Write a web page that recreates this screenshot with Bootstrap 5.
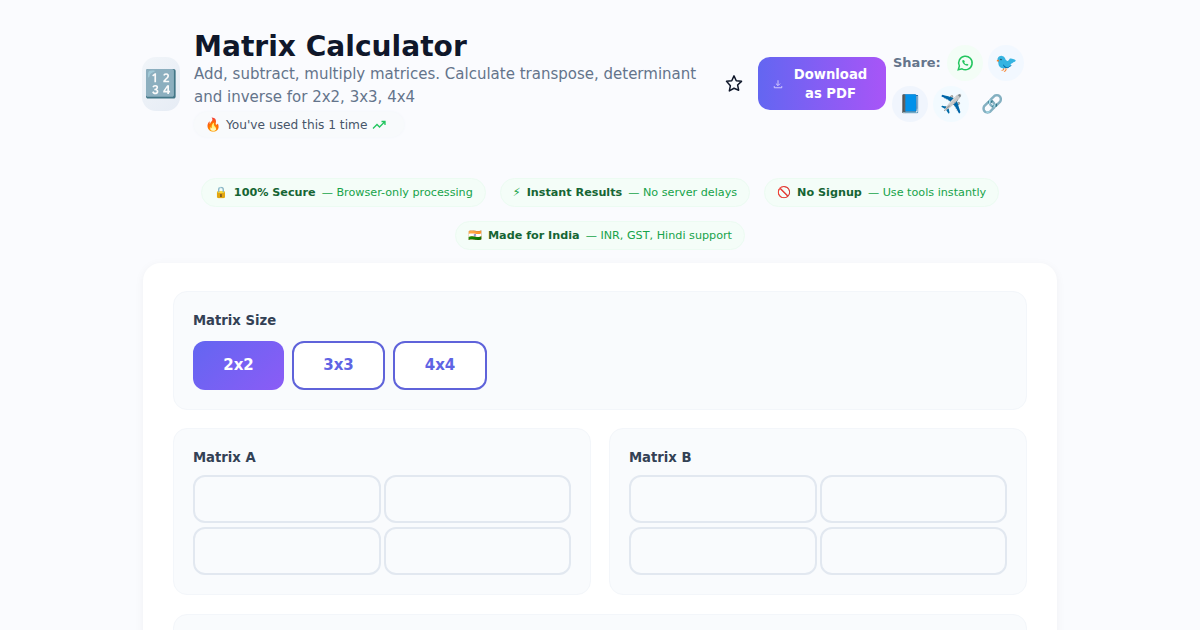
<!DOCTYPE html>
<html lang="en">
<head>
  <meta charset="UTF-8">
  <title>Matrix Calculator</title>
  <link href="https://cdn.jsdelivr.net/npm/bootstrap@5.3.0/dist/css/bootstrap.min.css" rel="stylesheet">
  <style>
    html { overflow: hidden; }
    body { background: #fafbfe; font-family: "DejaVu Sans", sans-serif; color: #0f172a; }
    .page-wrap { width: 914px; margin: 0 auto; padding-top: 30px; }
    .tool-head { height: 148px; }
    .tool-icon { width: 38px; height: 54px; margin: 27px 14px 0 -1px; border-radius: 14px; background: linear-gradient(135deg, #f1f5f9, #e6ecf5); font-size: 27px; line-height: 54px; text-align: center; flex: none; }
    .tool-title { font-size: 28.1px; font-weight: 700; line-height: 32px; margin: 1px 0 0; color: #0f172a; }
    .tool-sub { font-size: 15px; line-height: 23px; color: #64748b; margin: 0 0 3px; width: 504px; }
    .used-pill { display: inline-flex; align-items: center; gap: 5px; height: 25px; padding: 0 18px 0 11px; border-radius: 13px; background: #f8fafc; box-shadow: 0 0 3px #f1f5f9; font-size: 12.2px; color: #475569; }
    .used-emoji { font-size: 13px; }
    .fav-star { width: 18px; height: 18px; margin: 44px 0 0 27px; flex: none; }
    .pdf-btn { width: 128px; height: 53px; margin: 27px 0 0 15px; padding: 0 8px 0 15px; border: 0; border-radius: 12px; background: linear-gradient(90deg, #6366f1, #a855f7); color: #fff; font-size: 13.2px; font-weight: 700; line-height: 19px; flex: none; }
    .share-box { width: 140px; margin: 15px 0 0 6px; row-gap: 5px; flex: none; }
    .share-label { font-size: 13px; font-weight: 700; color: #64748b; margin: 0 6px 0 1px; }
    .share-btn { width: 36px; height: 36px; border-radius: 50%; font-size: 18px; line-height: 36px; text-align: center; margin-right: 5px; }
    .sb-green { background: #f3fdf6; }
    .sb-blue { background: #f2f8ff; }
    .sb-indigo { background: #f0f5fd; }
    .sb-sky { background: #f2faff; }
    .trust-row { gap: 14px; width: 820px; margin: 0 auto 13px; }
    .trust-pill { height: 29px; padding: 1px 12px 0; border-radius: 15px; background: #f4fdf8; border: 1px solid #ecfbf2; font-size: 11.2px; color: #16a34a; display: flex; align-items: center; white-space: nowrap; }
    .trust-pill b { color: #166534; margin: 0 6px 0 6px; }
    .main-card { background: #fff; border-radius: 18px; padding: 28px 30px; box-shadow: 0 2px 10px rgba(15, 23, 42, .05); }
    .calc-panel { background: #f9fbfd; border: 1px solid #f3f6fa; border-radius: 14px; padding: 20px 19px 19px; }
    .panel-label { font-size: 13.2px; font-weight: 700; color: #334155; line-height: 17px; margin-bottom: 12px; }
    .size-btn { height: 49px; border-radius: 12px; border: 2px solid #5f63da; background: #fff; color: #6064e4; font-size: 15px; font-weight: 700; padding: 0; }
    .size-on { width: 91px; border: 0; background: linear-gradient(135deg, #6366f1, #8b5cf6); color: #fff; }
    .size-w1 { width: 93px; }
    .size-w2 { width: 94px; }
    .matrix-cols { display: grid; grid-template-columns: 418px 418px; gap: 18px; margin: 18px 0 19px; }
    .matrix-cols .panel-label { margin-bottom: 9px; }
    .cell-grid { display: grid; grid-template-columns: 1fr 1fr; gap: 4px 3px; }
    .cell-box { height: 48px; border: 2px solid #e2e8f0; border-radius: 12px; background: #f9fbfd; width: 100%; }
    .last-panel { height: 60px; }
  </style>
</head>
<body>
  <div class="page-wrap">
    <div class="tool-head d-flex align-items-start">
      <div class="tool-icon">🔢</div>
      <div class="flex-grow-0">
        <h1 class="tool-title">Matrix Calculator</h1>
        <p class="tool-sub">Add, subtract, multiply matrices. Calculate transpose, determinant and inverse for 2x2, 3x3, 4x4</p>
        <span class="used-pill"><span class="used-emoji">🔥</span> You've used this 1 time
          <svg width="14" height="10" viewBox="0 0 14 10" fill="none" stroke="#22c55e" stroke-width="1.3"><path d="M1 8.5 5 4.5 7.5 7 13 1.5M9.5 1.5H13V5"/></svg>
        </span>
      </div>
      <svg class="fav-star" viewBox="0 0 24 24" fill="none" stroke="#0f172a" stroke-width="2" stroke-linejoin="round"><path d="M12 2.5 15 9l7 .8-5.2 4.8 1.4 7L12 19l-6.200 3.600 1.400-7L2 9.800 9 9z"/></svg>
      <button class="pdf-btn d-flex align-items-center" type="button">
        <svg width="10" height="10" viewBox="0 0 24 24" fill="none" stroke="#e5dcff" stroke-width="2" class="flex-shrink-0"><path d="M12 3v12M7 11l5 5 5-5M3 17v4h18v-4"/></svg>
        <span class="flex-grow-1 text-center">Download<br>as PDF</span>
      </button>
      <div class="share-box d-flex flex-wrap align-items-center">
        <span class="share-label">Share:</span>
        <div class="share-btn sb-green d-flex align-items-center justify-content-center">
          <svg width="18" height="18" viewBox="0 0 24 24" fill="none" stroke="#22c55e" stroke-width="2"><path d="M3 21l1.500-5A9 9 0 1 1 8 19.700z"/><path d="M9 8c-1 1-.8 2.500.5 4.300S13 15.500 15 15.500c1 0 1.500-.7 1.500-1.500l-2-1-1 .8c-1-.4-2-1.400-2.500-2.500l.8-1-1-2z" fill="#22c55e" stroke="none"/></svg>
        </div>
        <div class="share-btn sb-blue">🐦</div>
        <div class="share-btn sb-indigo">📘</div>
        <div class="share-btn sb-sky">✈️</div>
        <div class="share-btn">🔗</div>
      </div>
    </div>

    <div class="trust-row d-flex flex-wrap justify-content-center">
      <div class="trust-pill">🔒<b>100% Secure</b> — Browser-only processing</div>
      <div class="trust-pill">⚡<b>Instant Results</b> — No server delays</div>
      <div class="trust-pill">🚫<b>No Signup</b> — Use tools instantly</div>
      <div class="trust-pill">🇮🇳<b>Made for India</b> — INR, GST, Hindi support</div>
    </div>

    <div class="main-card">
      <div class="calc-panel">
        <div class="panel-label">Matrix Size</div>
        <div class="d-flex gap-2">
          <button class="size-btn size-on" type="button">2x2</button>
          <button class="size-btn size-w1" type="button">3x3</button>
          <button class="size-btn size-w2" type="button">4x4</button>
        </div>
      </div>
      <div class="matrix-cols">
        <div class="calc-panel">
          <div class="panel-label">Matrix A</div>
          <div class="cell-grid">
            <div class="cell-box"></div><div class="cell-box"></div>
            <div class="cell-box"></div><div class="cell-box"></div>
          </div>
        </div>
        <div class="calc-panel">
          <div class="panel-label">Matrix B</div>
          <div class="cell-grid">
            <div class="cell-box"></div><div class="cell-box"></div>
            <div class="cell-box"></div><div class="cell-box"></div>
          </div>
        </div>
      </div>
      <div class="calc-panel last-panel"></div>
    </div>
  </div>
  <script src="https://cdn.jsdelivr.net/npm/bootstrap@5.3.0/dist/js/bootstrap.bundle.min.js"></script>
</body>
</html>
